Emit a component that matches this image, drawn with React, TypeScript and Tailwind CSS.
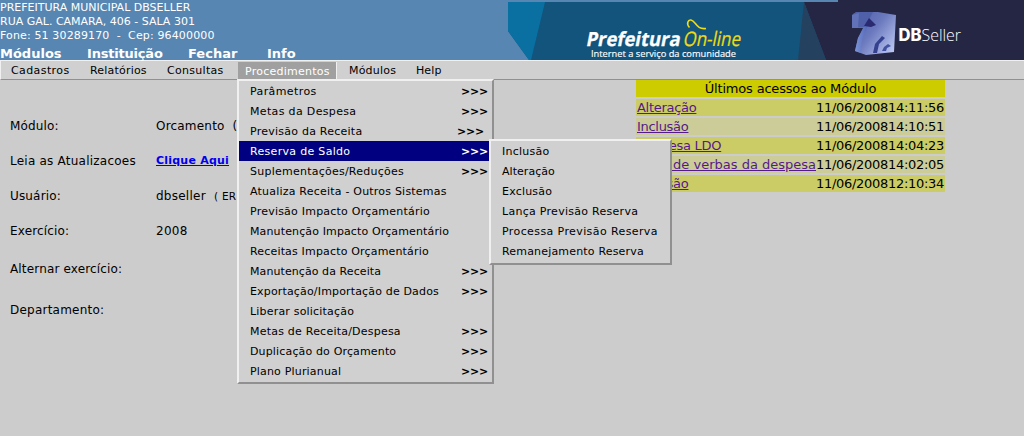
const menu: [string, string, string?][] = [
  ['Parâmetros', 'tracking-[0.4px]', 'w-[27px]'],
  ['Metas da Despesa', 'tracking-[0.34px]', 'w-[27px]'],
  ['Previsão da Receita', 'tracking-[0.24px]', 'w-[31px]'],
  ['Reserva de Saldo', 'tracking-[0.31px]', 'w-[27px]'],
  ['Suplementações/Reduções', 'tracking-[0.24px]', 'w-[27px]'],
  ['Atualiza Receita - Outros Sistemas', 'tracking-[0.21px]'],
  ['Previsão Impacto Orçamentário', 'tracking-[0.22px]'],
  ['Manutenção Impacto Orçamentário', 'tracking-[0.13px]'],
  ['Receitas Impacto Orçamentário', 'tracking-[0.17px]'],
  ['Manutenção da Receita', 'tracking-[0.08px]', 'w-[27px]'],
  ['Exportação/Importação de Dados', 'tracking-[0.16px]', 'w-[27px]'],
  ['Liberar solicitação', 'tracking-[0.19px]'],
  ['Metas de Receita/Despesa', 'tracking-[0.22px]', 'w-[27px]'],
  ['Duplicação do Orçamento', 'tracking-[0.15px]', 'w-[27px]'],
  ['Plano Plurianual', 'tracking-[0.18px]', 'w-[27px]'],
];

const submenu = [
  ['Inclusão', 'tracking-[0.25px]'],
  ['Alteração', 'tracking-[0.05px]'],
  ['Exclusão', 'tracking-[0.2px]'],
  ['Lança Previsão Reserva', 'tracking-[0.28px]'],
  ['Processa Previsão Reserva', 'tracking-[0.4px]'],
  ['Remanejamento Reserva', 'tracking-[0.18px]'],
];

const recent = [
  ['Alteração', '11/06/2008', '14:11:56'],
  ['Inclusão', '11/06/2008', '14:10:51'],
  ['Despesa LDO', '11/06/2008', '14:04:23'],
  ['Reserva de verbas da despesa', '11/06/2008', '14:02:05'],
  ['Inclusão', '11/06/2008', '12:10:34'],
];

function Banner() {
  return (
    <svg width="516" height="60" viewBox="508 0 516 60" className="shrink-0">
      <defs>
        <linearGradient id="cube" x1="0" y1="0" x2="1" y2="0.8">
          <stop offset="0" stopColor="#4a5ba8" />
          <stop offset="0.5" stopColor="#6b79be" />
          <stop offset="1" stopColor="#b8c4f0" />
        </linearGradient>
        <linearGradient id="side" x1="0" y1="0" x2="1" y2="0">
          <stop offset="0" stopColor="#7d94d8" />
          <stop offset="1" stopColor="#5268b8" />
        </linearGradient>
      </defs>
      <path d="M508 2H838V0H1024V60H529L508 31Z" fill="#13547c" />
      <path d="M508 2H545L531 60H529L508 31Z" fill="#0a70a2" />
      <path d="M804 2H838V0H1024V60H826Z" fill="#252644" />
      <path d="M804 2L826 60H798Z" fill="#24415f" />
      <g fontFamily="'Open Sans', sans-serif" fill="#fff">
        <g transform="translate(585.5 45.5) skewX(-11)">
          <text fontSize="19.5" fontWeight="700" stroke="#fff" strokeWidth="0.3" textLength="94" lengthAdjust="spacingAndGlyphs">Prefeitura</text>
          <text x="97" fontSize="20" fill="#f0dc10" stroke="#f0dc10" strokeWidth="0.25" textLength="57.5" lengthAdjust="spacingAndGlyphs">On-line</text>
        </g>
        <text x="591" y="56.5" fontSize="9.8" textLength="145" stroke="#fff" strokeWidth="0.15" lengthAdjust="spacingAndGlyphs">Internet a serviço da comunidade</text>
      </g>
      <path d="M689.5 27.5C686 24 688 19.5 691 20C696 21 696 30 706 28.5" fill="none" stroke="#f0dc10" strokeWidth="1.6" />
      <path d="M853 14L857 12L878 12L896 15L894 52L866 55L855 51L858 38L863 28H853Z" fill="url(#cube)" />
      <path d="M852 15L856 12H873L865 27H852Z" fill="#4f60a8" />
      <path d="M859 13L858 28H852V15Z" fill="#6172b8" />
      <path d="M864 27L868 25L862 40L861 53L855 51L858 38Z" fill="url(#side)" />
      <path d="M869 18L876 25L871 27L864 26Z" fill="#292a70" />
      <path d="M873 53L875 44L882 36L885 38L879 44L877 53Z" fill="#34418e" />
      <path d="M882 51L884 47L888 44L891 46L887 48L886 51Z" fill="#4252a0" />
      <g fill="#fff">
        <text x="898.5" y="41" fontFamily="Inter, sans-serif" fontSize="17" fontWeight="800" textLength="23" lengthAdjust="spacingAndGlyphs">DB</text>
        <text x="921.5" y="41" fontFamily="'Open Sans', sans-serif" fontSize="17" fontWeight="300" textLength="39.5" lengthAdjust="spacingAndGlyphs">Seller</text>
      </g>
    </svg>
  );
}

function Arrows({ width }: { width: string }) {
  return <span className={`${width} shrink-0 text-[11px] font-bold tracking-[-0.2px]`}>&gt;&gt;&gt;</span>;
}

function Procedures() {
  return (
    <div className="absolute top-[79px] left-[237px] z-10 h-[305px] w-[257px] border-2 border-t-[#f0f0f0] border-r-[#909090] border-b-[#909090] border-l-[#f0f0f0] bg-[#d0d0d0]">
      {menu.map(([label, tracking, arrow], i) => (
        <div
          key={label}
          className={`flex h-5 items-center justify-between pt-[2px] pl-[11px] text-[11px] leading-4 whitespace-nowrap ${i === 3 ? 'mr-[3px] bg-[#000080] pr-px text-white' : 'pr-1'}`}
        >
          <span className={tracking}>{label}</span>
          {arrow && <Arrows width={arrow} />}
        </div>
      ))}
      <div className="absolute top-[58px] left-[250px] h-[126px] w-[183px] border-2 border-t-[#f0f0f0] border-r-[#909090] border-b-[#909090] border-l-[#f0f0f0] bg-[#d0d0d0]">
        {submenu.map(([label, tracking]) => (
          <div key={label} className={`flex h-5 items-center pt-[2px] pl-[11px] text-[11px] leading-4 whitespace-nowrap ${tracking}`}>
            {label}
          </div>
        ))}
      </div>
    </div>
  );
}

export default function App() {
  return (
    <div className="relative h-[436px] w-[1024px] overflow-hidden bg-[#cccccc] font-['DejaVu_Sans',sans-serif] text-black">
      <header className="flex h-[60px] justify-between bg-[#5786b2] text-white">
        <div className="flex flex-col whitespace-pre">
          <div className="pt-px text-[11px] leading-[14px]">
            <p>PREFEITURA MUNICIPAL DBSELLER</p>
            <p>RUA GAL. CAMARA, 406 - SALA 301</p>
            <p className="tracking-[0.14px]">Fone: 51 30289170  -  Cep: 96400000</p>
          </div>
          <nav className="mt-[3px] flex text-[13px] leading-[15px] font-bold">
            <span className="w-[87px]">Módulos</span>
            <span className="w-[101px] tracking-[-0.2px]">Instituição</span>
            <span className="w-[79px]">Fechar</span>
            <span>Info</span>
          </nav>
        </div>
        <Banner />
      </header>
      <nav className="flex h-5 border-t border-b border-l border-t-[#f0f0f0] border-b-[#909090] border-l-[#f0f0f0] bg-[#d0d0d0] text-[11px] leading-5 tracking-[0.4px]">
        <span className="w-[79px] pl-[10px]">Cadastros</span>
        <span className="w-[77px] pl-[10px] tracking-[0.2px]">Relatórios</span>
        <span className="w-[80px] pl-[10px] tracking-[0.3px]">Consultas</span>
        <span className="mt-px ml-px h-[17px] w-[99px] border-r border-[#f0f0f0] bg-[#a0a0a0] pl-[7px] tracking-[0.25px] text-white">Procedimentos</span>
        <span className="w-[67px] pl-3 tracking-[0.2px]">Módulos</span>
        <span className="pl-3 tracking-[0.1px]">Help</span>
      </nav>
      <main className="flex justify-between pr-[79px]">
        <dl className="grid w-[237px] grid-cols-[146px_1fr] grid-rows-[35px_35px_35px_35px_41px_41px] items-center overflow-hidden pt-[28px] pl-[10px] text-[12px] tracking-[0.16px] whitespace-pre">
          <dt>Módulo:</dt>
          <dd className="tracking-[0.2px]">Orcamento  (</dd>
          <dt className="tracking-[0.23px]">Leia as Atualizacoes</dt>
          <dd><a href="#" className="text-[11px] font-bold tracking-[0.22px] text-[#0000ee] underline">Clique Aqui</a></dd>
          <dt>Usuário:</dt>
          <dd className="tracking-[0.25px]">dbseller  <span className="text-[10.5px]">( ER</span></dd>
          <dt>Exercício:</dt>
          <dd className="tracking-[0.3px]">2008</dd>
          <dt>Alternar exercício:</dt>
          <dd />
          <dt className="tracking-[0.23px]">Departamento:</dt>
          <dd />
        </dl>
        <section className="flex w-[309px] flex-col gap-[2px] text-[13px] leading-[17px]">
          <h2 className="h-[17px] bg-[#cccc00] text-center tracking-[-0.19px]">Últimos acessos ao Módulo</h2>
          {recent.map(([name, date, time], i) => (
            <div key={time} className={`flex h-[17px] justify-between pr-px pl-px tracking-[-0.29px] whitespace-nowrap ${i % 2 ? 'bg-[#cccc99]' : 'bg-[#cccc66]'}`}>
              <a href="#" className={`w-[179px] text-[#551a8b] underline ${i === 3 ? 'flex justify-end tracking-[0px]' : ''}`}>{name}</a>
              <span className="flex w-[128px]">
                <span className="w-[72px]">{date}</span>
                <span>{time}</span>
              </span>
            </div>
          ))}
        </section>
      </main>
      <Procedures />
    </div>
  );
}
